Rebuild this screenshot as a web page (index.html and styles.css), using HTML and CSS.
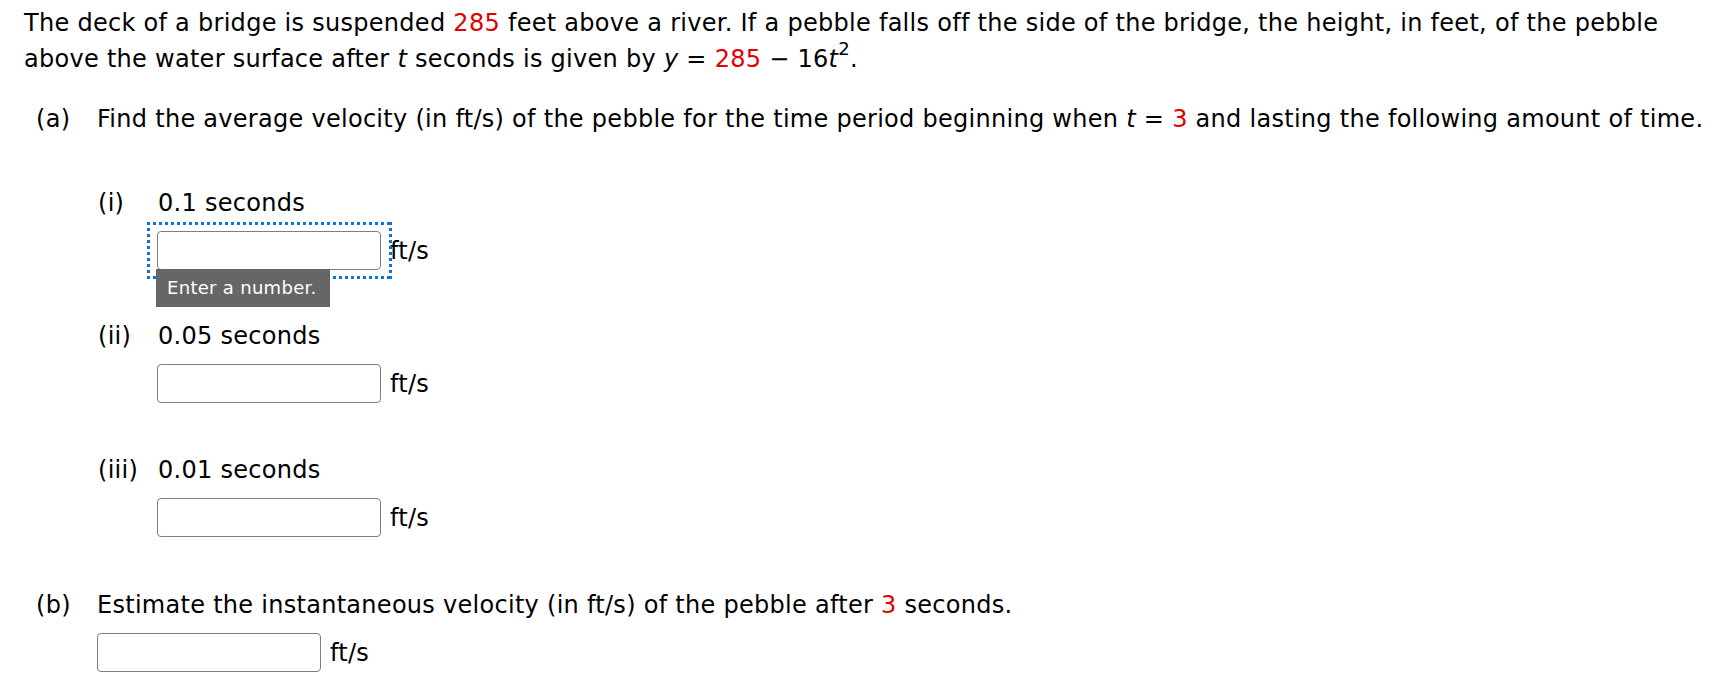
FILE: index.html
```html
<!DOCTYPE html>
<html>
<head>
<meta charset="utf-8">
<link rel="stylesheet" href="styles.css">
</head>
<body>
<div class="page">
  <p class="intro">The deck of a bridge is suspended <span class="red">285</span> feet above a river. If a pebble falls off the side of the bridge, the height, in feet, of the pebble above the water surface after <i>t</i> seconds is given by <i>y</i> = <span class="red">285</span> &minus; 16<i>t</i><sup>2</sup>.</p>

  <div class="part part-a">
    <span class="plabel">(a)</span>
    <div class="pbody">
      <p class="ptext">Find the average velocity (in ft/s) of the pebble for the time period beginning when <i>t</i> = <span class="red">3</span> and lasting the following amount of time.</p>

      <div class="sub sub-first">
        <span class="slabel">(i)</span>
        <div class="sbody">
          <div class="stext">0.1 seconds</div>
          <div class="answer focused">
            <input class="num" type="text"><span class="unit">ft/s</span>
            <span class="focusring"></span>
            <span class="tip">Enter a number.</span>
          </div>
        </div>
      </div>

      <div class="sub">
        <span class="slabel">(ii)</span>
        <div class="sbody">
          <div class="stext">0.05 seconds</div>
          <div class="answer">
            <input class="num" type="text"><span class="unit">ft/s</span>
          </div>
        </div>
      </div>

      <div class="sub sub-last">
        <span class="slabel">(iii)</span>
        <div class="sbody">
          <div class="stext">0.01 seconds</div>
          <div class="answer">
            <input class="num" type="text"><span class="unit">ft/s</span>
          </div>
        </div>
      </div>
    </div>
  </div>

  <div class="part part-b">
    <span class="plabel">(b)</span>
    <div class="pbody">
      <p class="ptext">Estimate the instantaneous velocity (in ft/s) of the pebble after <span class="red">3</span> seconds.</p>
      <div class="answer">
        <input class="num" type="text"><span class="unit">ft/s</span>
      </div>
    </div>
  </div>
</div>
</body>
</html>
```

FILE: styles.css
```css
html, body {
  margin: 0;
  padding: 0;
  background: #ffffff;
}

.page {
  font-family: "DejaVu Sans", Verdana, sans-serif;
  font-size: 24px;
  line-height: 36px;
  letter-spacing: 0.28px;
  color: #000000;
  padding: 5px 10px 0 24px;
  width: 1696px;
}

p {
  margin: 0;
}

.red {
  color: #e00000;
}

i {
  font-style: italic;
}

sup {
  font-size: 18px;
  line-height: 0;
  vertical-align: 12px;
}

.intro {
  width: 1670px;
}

.part {
  display: flex;
  align-items: flex-start;
}

.part-a {
  margin-top: 24px;
}

.part-b {
  margin-top: 50px;
}

.plabel {
  width: 61px;
  padding-left: 12px;
  flex: none;
}

.pbody {
  flex: 1;
  white-space: nowrap;
}

.sub {
  display: flex;
  align-items: flex-start;
  margin-top: 48px;
}

.sub-last {
  margin-top: 49px;
}

.slabel {
  width: 59px;
  padding-left: 1px;
  flex: none;
}

.sbody {
  flex: 1;
}

.stext {
  padding-left: 1px;
}

.answer {
  position: relative;
  display: flex;
  align-items: center;
  margin-top: 10px;
  height: 39px;
}

.num {
  box-sizing: border-box;
  width: 224px;
  height: 39px;
  margin: 0;
  border: 1px solid #7f7f7f;
  border-radius: 4px;
  background: #ffffff;
  font: inherit;
  padding: 0 6px;
  outline: none;
}

.unit {
  margin-left: 9px;
}

.focusring {
  position: absolute;
  left: -10px;
  top: -9px;
  width: 245px;
  height: 57px;
  background:
    repeating-linear-gradient(90deg, #0a74da 0 3px, transparent 3px 6px) left top / 100% 3px no-repeat,
    repeating-linear-gradient(90deg, #0a74da 0 3px, transparent 3px 6px) left bottom / 100% 3px no-repeat,
    repeating-linear-gradient(180deg, #0a74da 0 3px, transparent 3px 6px) left top / 3px 100% no-repeat,
    repeating-linear-gradient(180deg, #0a74da 0 3px, transparent 3px 6px) right top / 3px 100% no-repeat;
  pointer-events: none;
}

.tip {
  position: absolute;
  left: -1px;
  top: 38px;
  box-sizing: border-box;
  width: 174px;
  height: 38px;
  padding: 0 0 0 11px;
  background: #666666;
  color: #ffffff;
  font-size: 18px;
  line-height: 38px;
  letter-spacing: 0.3px;
  white-space: nowrap;
}
```
